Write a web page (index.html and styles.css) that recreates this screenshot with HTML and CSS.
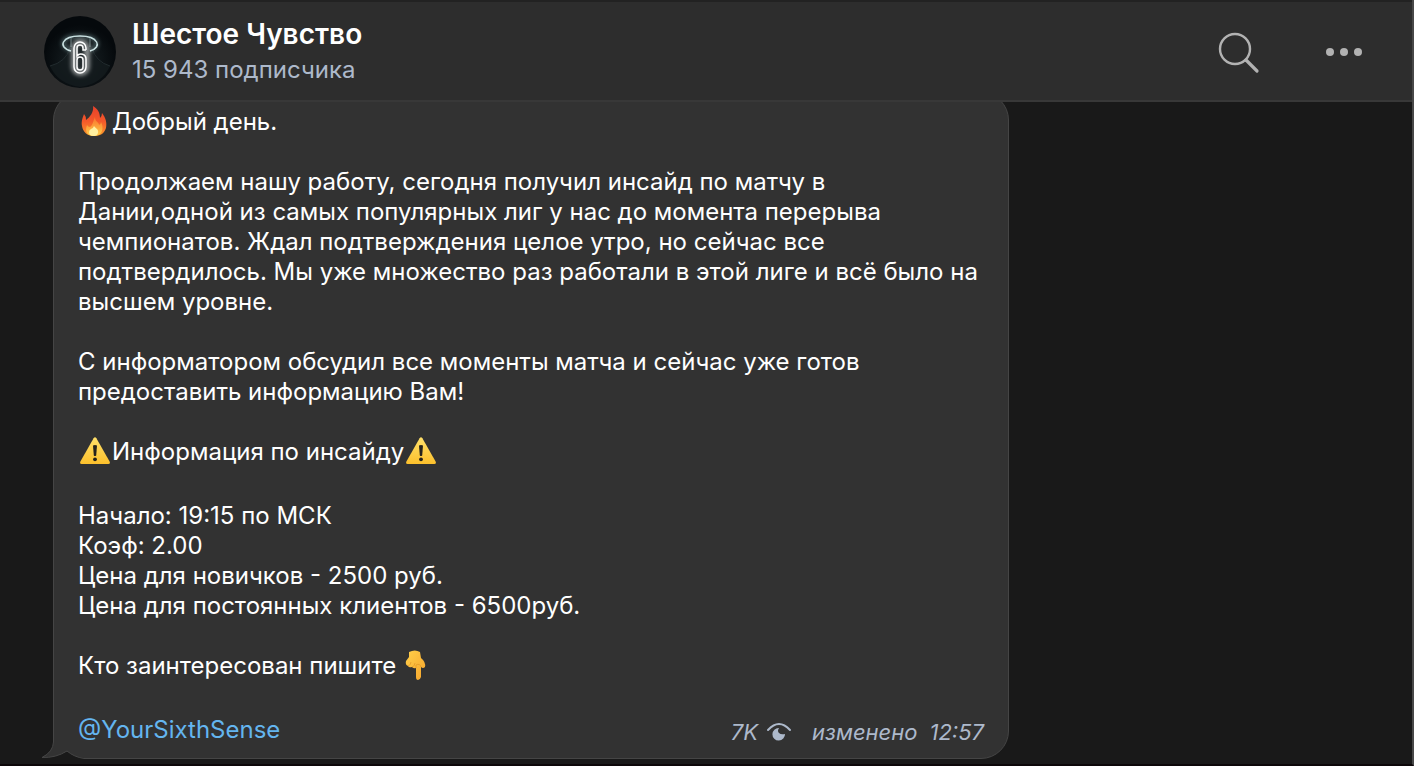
FILE: index.html
```
<!DOCTYPE html>
<html lang="ru">
<head>
    <meta charset="utf-8">
    <meta name="viewport" content="width=device-width, initial-scale=1">
    <title>Шестое Чувство</title>
    <link rel="stylesheet" href="styles.css">
</head>
<body>
    <!-- shared icons -->
    <svg class="sprite" aria-hidden="true">
        <defs>
            <linearGradient id="warnFill" x1="0" y1="0" x2="0" y2="1">
                <stop offset="0" stop-color="#ffe06a"/>
                <stop offset="1" stop-color="#fcc02c"/>
            </linearGradient>
            <linearGradient id="fireFill" x1="0" y1="0" x2="0" y2="1">
                <stop offset="0" stop-color="#e8402a"/>
                <stop offset="0.5" stop-color="#f4582a"/>
                <stop offset="1" stop-color="#fb9a2c"/>
            </linearGradient>
            <linearGradient id="flameFill" x1="0" y1="0" x2="0" y2="1">
                <stop offset="0" stop-color="#f9702c"/>
                <stop offset="1" stop-color="#ffd24a"/>
            </linearGradient>
            <linearGradient id="handFill" x1="0" y1="0" x2="1" y2="1">
                <stop offset="0" stop-color="#ffcf4a"/>
                <stop offset="1" stop-color="#f6a52c"/>
            </linearGradient>
            <symbol id="warning" viewBox="0 0 32 28">
                <path fill="url(#warnFill)" d="M15.6 1.3Q17 -.6 18.4 1.3L31.6 24.4Q32.6 26.8 30.4 27H3.6Q1.4 26.8 2.4 24.4Z"/>
                <path fill="#25221c" d="M15 8.6Q17 7.2 19 8.6L18.2 18.4Q17 19.6 15.8 18.4Z"/>
                <circle fill="#25221c" cx="17" cy="22.3" r="1.9"/>
            </symbol>
        </defs>
    </svg>

    <header class="header">
        <svg class="avatar" viewBox="0 0 72 72" role="img" aria-label="Шестое Чувство">
            <defs>
                <radialGradient id="avatarBg" cx="0.5" cy="0.62" r="0.5">
                    <stop offset="0" stop-color="#3a4245"/>
                    <stop offset="0.45" stop-color="#11181b"/>
                    <stop offset="1" stop-color="#05090c"/>
                </radialGradient>
                <filter id="glow" x="-50%" y="-50%" width="200%" height="200%">
                    <feGaussianBlur stdDeviation="2"/>
                </filter>
            </defs>
            <circle cx="36" cy="36" r="36" fill="url(#avatarBg)"/>
            <path fill="#141b1e" opacity="0.8" d="M6 50Q22 46 26 32L27 22H46L47 32Q50 46 66 50Q58 68 36 71Q14 68 6 50Z"/>
            <path fill="none" stroke="#222b2e" d="M6 50Q22 46 26 32M66 50Q52 46 48 32"/>
            <path fill="none" stroke="#9ec5c8" stroke-width="3" opacity="0.5" filter="url(#glow)" d="M27 34C15 31 16 20 36 20S57 31 46 34"/>
            <path fill="none" stroke="#c9e0e1" stroke-width="1.5" d="M27 35C13 31 18 20 36 20S59 31 46 35"/>
            <path fill="none" stroke="#6b7c7f" d="M27 22V31M46 22V31"/>
            <rect x="30" y="26" width="13" height="31" rx="6" fill="none" stroke="#fff" stroke-width="5" opacity="0.6" filter="url(#glow)"/>
            <path fill="none" stroke="#fff" stroke-width="1.5" d="M42 34V32A6 6 0 0 0 30 32V51A6 6 0 0 0 42 51V43A5 5 0 0 0 33 40V32A3 3 0 0 1 39 32V34H42M33 44A3 3 0 0 1 39 44V51A3 3 0 0 1 33 51Z"/>
        </svg>
        <div class="channel">
            <h1 class="channel-name">Шестое Чувство</h1>
            <div class="channel-count">15 943 подписчика</div>
        </div>
        <div class="actions">
            <button class="action" type="button" aria-label="Поиск">
                <svg width="44" height="44" viewBox="0 0 44 44">
                    <circle cx="19" cy="19" r="15" fill="none" stroke="#b2b2b2" stroke-width="2.4"/>
                    <path d="M30 30L41 41" stroke="#b2b2b2" stroke-width="3.2" stroke-linecap="round"/>
                </svg>
            </button>
            <button class="action" type="button" aria-label="Меню">
                <svg width="44" height="44" viewBox="0 0 44 44" fill="#b2b2b2">
                    <circle cx="8" cy="22" r="4"/>
                    <circle cx="22" cy="22" r="4"/>
                    <circle cx="36" cy="22" r="4"/>
                </svg>
            </button>
        </div>
    </header>

    <main class="chat">
        <article class="message">
            <svg class="tail" width="42" height="40" viewBox="0 0 42 40" aria-hidden="true">
                <path fill="#191919" d="M0 0H11V40H0Z M10 40L25 32Q32 38 42 39V40Z"/>
                <path fill="#323232" d="M11.5 0V23Q11 33 0 38.5Q14 39 25 32Q32 38 42 38.5V0Z"/>
                <path fill="none" stroke="#454545" d="M11.5 0V23Q11 33 0 38.5Q14 39 25 32Q32 38 42 39.5"/>
            </svg>
            <p>
                <svg class="emoji fire" viewBox="0 0 32 32" role="img" aria-label="огонь">
                    <path fill="url(#fireFill)" d="M15 1C20 4 22 8 22 13Q24 11 24 8C28 13 29 18 28 23C26 29 22 31 16 31C9 31 5 27 4 21C3 16 5 12 6 9Q8 11 8 15C12 12 16 7 15 1Z"/>
                    <path fill="url(#flameFill)" d="M17 12C17 17 21 17 21 20Q23 19 23 17C26 22 25 31 16 31C8 31 7 25 9 20Q10 22 12 22C15 20 15 16 17 12Z"/>
                    <path fill="#fff0a0" d="M16 21C18 24 21 24 20 28Q19 31 16 31Q11 31 11 27Q11 25 13 24Q15 24 16 21Z"/>
                </svg>Добрый день.
            </p>
            <p>
                Продолжаем нашу работу, сегодня получил инсайд по матчу в<br>
                Дании,одной из самых популярных лиг у нас до момента перерыва<br>
                чемпионатов. Ждал подтверждения целое утро, но сейчас все<br>
                подтвердилось. Мы уже множество раз работали в этой лиге и всё было на<br>
                высшем уровне.
            </p>
            <p>
                С информатором обсудил все моменты матча и сейчас уже готов<br>
                предоставить информацию Вам!
            </p>
            <p class="with-emoji">
                <svg class="emoji" role="img" aria-label="внимание"><use href="#warning"/></svg>Информация по инсайду<svg class="emoji" role="img" aria-label="внимание"><use href="#warning"/></svg>
            </p>
            <p>
                Начало: 19:15 по МСК<br>
                Коэф: 2.00<br>
                Цена для новичков - 2500 руб.<br>
                Цена для постоянных клиентов - 6500руб.
            </p>
            <p class="with-emoji">
                Кто заинтересован пишите
                <svg class="emoji hand" viewBox="0 0 24 32" role="img" aria-label="палец вниз">
                    <path fill="url(#handFill)" d="M6 3Q12 0 17 3L18 9Q23 13 22 18Q20 20 18 18V28Q17 31 15 31Q13 31 13 28V19Q11 20 9 18Q6 19 5 17Q2 16 3 12L6 8Z"/>
                    <path fill="none" stroke="#e39a28" stroke-width="0.8" d="M5 17Q8 16 8 13M9 18Q12 17 12 14M13 19V16Q17 14 18 18"/>
                </svg>
            </p>
            <footer class="message-footer">
                <a class="mention" href="#">@YourSixthSense</a>
                <div class="meta">
                    <span>7K</span>
                    <svg class="views" width="26" height="20" viewBox="0 0 26 20" role="img" aria-label="просмотры">
                        <path fill="none" stroke="#adb9cb" stroke-width="2" stroke-linecap="round" d="M2 8Q13 -4 24 8"/>
                        <path fill="#adb9cb" d="M13 6A6.300 6.300 0 1 0 19 12Q15 13 13 11Q11 9 13 6Z"/>
                    </svg>
                    <span class="edited">изменено</span>
                    <time>12:57</time>
                </div>
            </footer>
        </article>
    </main>
</body>
</html>
```
FILE: styles.css
```
* {
    box-sizing: border-box;
}

body {
    margin: 0;
    min-height: 100vh;
    display: flex;
    flex-direction: column;
    background: #191919;
    border-right: 2px solid #484848;
    border-bottom: 2px solid #0c0709;
    color: #fff;
    font-family: Inter, "Liberation Sans", sans-serif;
    font-size: 24px;
    line-height: 30px;
}

.sprite {
    position: absolute;
    width: 0;
    height: 0;
}

.header {
    position: relative;
    z-index: 1;
    display: flex;
    align-items: center;
    height: 102px;
    padding: 2px 46px 0 44px;
    background: #2d2d2d;
    border-top: 2px solid #222;
    border-bottom: 2px solid #383838;
}

.avatar {
    width: 72px;
    height: 72px;
    margin-right: 16px;
}

.channel-name {
    margin: 0;
    font-size: 28px;
    font-weight: 600;
    line-height: 36px;
}

.channel-count {
    color: #adb9cb;
    line-height: 36px;
}

.actions {
    display: flex;
    gap: 62px;
    margin-left: auto;
}

.action {
    width: 44px;
    height: 44px;
    padding: 0;
    border: 0;
    background: none;
    cursor: pointer;
}

.action svg {
    display: block;
}

.chat {
    flex: 1;
    padding: 0 53px;
}

/* the bubble is scrolled a little under the header */
.message {
    position: relative;
    max-width: 956px;
    margin-top: -10px;
    padding: 14px 24px 13px;
    background: #323232;
    border: 1px solid #454545;
    border-radius: 28px;
}

.message p {
    margin: 0 0 30px;
    white-space: nowrap;
}

.message .with-emoji {
    margin-bottom: 34px;
}

.emoji {
    width: 32px;
    height: 28px;
    margin-right: 2px;
    vertical-align: -5px;
}

.fire,
.hand {
    height: 32px;
    margin-top: -4px;
    vertical-align: -7px;
}

.hand {
    width: 24px;
}

.tail {
    position: absolute;
    left: -12px;
    bottom: -1px;
}

.message-footer {
    position: relative;
    display: flex;
    align-items: center;
    justify-content: space-between;
}

.mention {
    color: #64b5ef;
    text-decoration: none;
}

.meta {
    display: flex;
    align-items: center;
    padding-top: 2px;
    margin-bottom: -2px;
    color: #adb9cb;
    font-size: 22px;
    font-style: italic;
}

.views {
    margin: 0 20px 0 8px;
}

.edited {
    margin-right: 12px;
}
```
